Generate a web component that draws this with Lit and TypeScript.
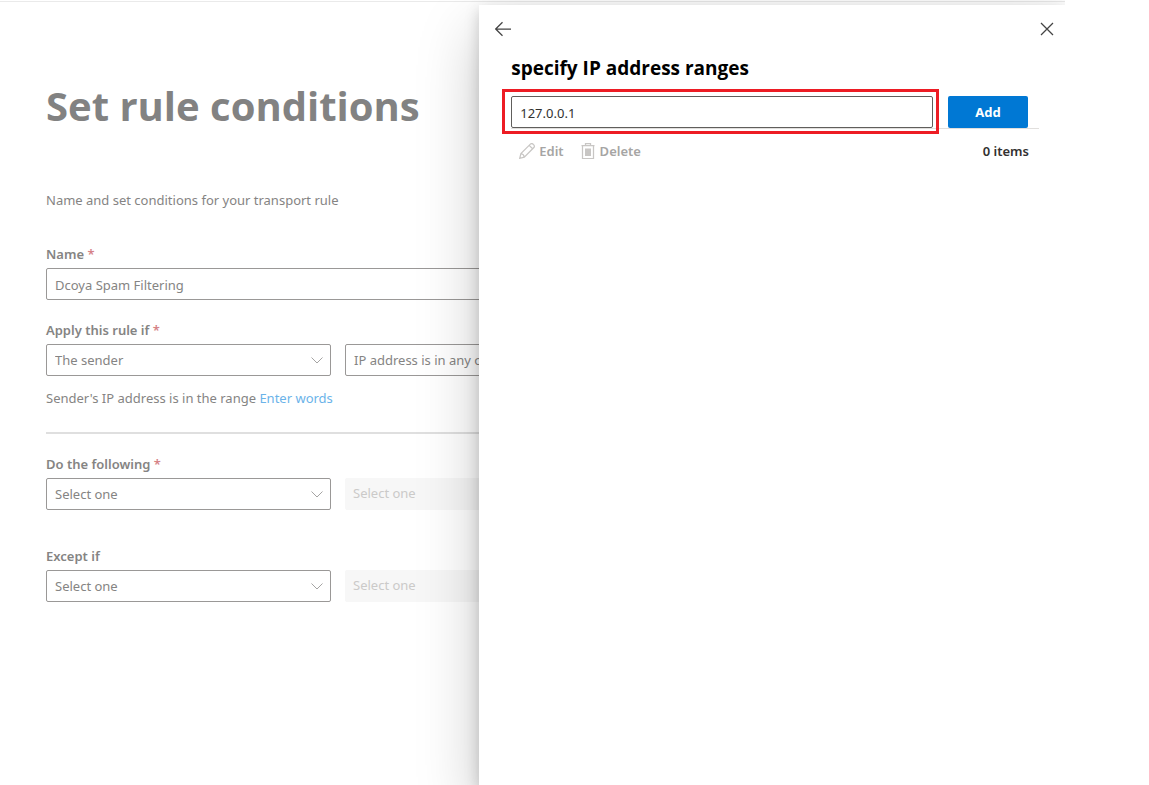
import { LitElement, html, css, nothing } from "lit";
import { customElement, property, state } from "lit/decorators.js";

const chevron = html`<svg class="chevron" viewBox="0 0 14 14" aria-hidden="true">
  <path d="M1.5 4.5 L7 10 L12.5 4.5" fill="none" stroke="currentColor" stroke-width="1" />
</svg>`;

@customElement("rule-select")
class RuleSelect extends LitElement {
  @property() label = "";
  @property() value = "";
  @property({ type: Boolean }) disabled = false;

  static styles = css`
    :host {
      display: block;
      min-width: 0;
    }
    .wrap {
      display: grid;
      align-items: center;
    }
    .select,
    .chevron {
      grid-area: 1 / 1;
    }
    .select {
      appearance: none;
      box-sizing: border-box;
      width: 100%;
      height: 32px;
      margin: 0;
      padding: 0 32px 0 8px;
      border: 1px solid #9a9897;
      border-radius: 2px;
      background: #fff;
      color: #858483;
      font: 400 13px/20px "Noto Sans", "Open Sans", sans-serif;
      opacity: 1;
      text-overflow: ellipsis;
    }
    .select:disabled {
      padding-left: 7px;
      padding-bottom: 2px;
      border-color: #f7f7f7;
      background: #f7f7f7;
      color: #cbcac9;
    }
    .chevron {
      justify-self: end;
      width: 14px;
      height: 14px;
      margin-right: 7px;
      color: #a5a4a3;
      pointer-events: none;
    }
  `;

  render() {
    return html`<div class="wrap">
      <select class="select" aria-label=${this.label} ?disabled=${this.disabled}>
        <option>${this.value}</option>
      </select>
      ${this.disabled ? nothing : chevron}
    </div>`;
  }
}

@customElement("app-root")
class AppRoot extends LitElement {
  @state() private address = "127.0.0.1";

  static styles = css`
    :host {
      display: block;
      background: #fff;
      font: 400 13px/20px "Noto Sans", "Open Sans", sans-serif;
      color: #858483;
    }
    .frame {
      position: relative;
      box-sizing: border-box;
      min-height: 100vh;
      margin-right: 84px;
      padding-top: 1px;
      overflow: hidden;
    }
    .page {
      padding: 75px 46px 0;
      border-top: 1px solid #eaeaea;
    }
    .title {
      margin: 0 0 55px;
      font-family: "Open Sans", sans-serif;
      font-size: 40px;
      line-height: 58px;
      font-weight: 700;
      color: #828282;
    }
    .intro {
      margin: 0 0 34px;
    }
    .form {
      display: flex;
      flex-direction: column;
      max-width: 640px;
    }
    .field {
      display: flex;
      flex-direction: column;
      margin-bottom: 20px;
    }
    .label {
      margin-bottom: 4px;
      font-weight: 600;
    }
    .star {
      color: #d58287;
    }
    .text {
      box-sizing: border-box;
      width: 100%;
      height: 32px;
      margin: 0;
      padding: 1px 8px 0;
      border: 1px solid #9a9897;
      border-radius: 2px;
      background: #fff;
      color: inherit;
      font: inherit;
    }
    .pair {
      display: grid;
      grid-template-columns: 285px 1fr;
      gap: 14px;
    }
    .summary {
      margin: 12px 0 4px;
    }
    .link {
      color: #6bb3e9;
      text-decoration: none;
    }
    .divider {
      width: 100%;
      height: 2px;
      margin: 0 0 20px;
      border: 0;
      background: #dfdfdf;
    }
    .spaced {
      margin-bottom: 36px;
    }
    .panel {
      position: absolute;
      top: 5px;
      right: 0;
      bottom: 0;
      box-sizing: border-box;
      width: 55%;
      background: #fff;
      color: #323130;
      box-shadow:
        0 26px 58px rgba(0, 0, 0, 0.22),
        0 5px 14px rgba(0, 0, 0, 0.18);
    }
    .nav {
      display: flex;
      justify-content: space-between;
      padding: 8px 2px 0 8px;
    }
    .icon-button {
      display: grid;
      place-items: center;
      width: 32px;
      height: 32px;
      padding: 0;
      border: 0;
      background: none;
      color: #444;
    }
    .icon {
      width: 16px;
      height: 16px;
      fill: none;
      stroke: currentColor;
      stroke-width: 1.25;
    }
    .content {
      padding: 8px 26px 0 32px;
    }
    .heading {
      margin: 0 0 13px;
      font-family: "Open Sans", sans-serif;
      font-size: 19px;
      line-height: 30px;
      font-weight: 700;
      color: #000;
    }
    .entry {
      display: flex;
      gap: 15px;
      padding-right: 11px;
      border-bottom: 1px solid #e1dfdd;
    }
    .marked {
      position: relative;
      flex: 1;
    }
    .marked::after {
      content: "";
      position: absolute;
      inset: -7px -6px -6px -9px;
      border: 3px solid #ed1c24;
      pointer-events: none;
    }
    .address {
      display: block;
      border-color: #605e5c;
    }
    .add {
      width: 80px;
      height: 32px;
      padding: 0;
      border: 0;
      border-radius: 2px;
      background: #0078d4;
      color: #fff;
      font: inherit;
      font-weight: 700;
    }
    .toolbar {
      display: flex;
      align-items: center;
      gap: 16px;
      padding: 12px 10px 0 8px;
    }
    .tool {
      display: flex;
      align-items: center;
      gap: 4px;
      padding: 0;
      border: 0;
      background: none;
      color: #a6a5a4;
      font: inherit;
      font-weight: 600;
    }
    .tool-icon {
      color: #c8c6c4;
    }
    .count {
      margin-left: auto;
      font-weight: 600;
    }
  `;

  private onInput(e: Event) {
    this.address = (e.target as HTMLInputElement).value;
  }

  render() {
    const star = html`<span class="star">*</span>`;
    return html`
      <div class="frame">
        <main class="page">
          <h1 class="title">Set rule conditions</h1>
          <p class="intro">Name and set conditions for your transport rule</p>
          <form class="form">
            <div class="field">
              <label class="label" for="name">Name ${star}</label>
              <input class="text" id="name" value="Dcoya Spam Filtering" />
            </div>
            <div class="field">
              <span class="label">Apply this rule if ${star}</span>
              <div class="pair">
                <rule-select label="Apply this rule if" value="The sender"></rule-select>
                <rule-select label="Condition" value="IP address is in any of these ranges"></rule-select>
              </div>
              <p class="summary">
                Sender's IP address is in the range <a class="link" href="#words">Enter words</a>
              </p>
            </div>
            <hr class="divider" />
            <div class="field spaced">
              <span class="label">Do the following ${star}</span>
              <div class="pair">
                <rule-select label="Do the following" value="Select one"></rule-select>
                <rule-select label="Action detail" value="Select one" disabled></rule-select>
              </div>
            </div>
            <div class="field">
              <span class="label">Except if</span>
              <div class="pair">
                <rule-select label="Except if" value="Select one"></rule-select>
                <rule-select label="Exception detail" value="Select one" disabled></rule-select>
              </div>
            </div>
          </form>
        </main>

        <aside class="panel" role="dialog" aria-labelledby="heading">
          <div class="nav">
            <button class="icon-button" type="button" aria-label="Back">
              <svg class="icon" viewBox="0 0 16 16">
                <path d="M16 8 H1 M7.5 1.2 L0.7 8 L7.5 14.8" />
              </svg>
            </button>
            <button class="icon-button" type="button" aria-label="Close">
              <svg class="icon" viewBox="0 0 16 16">
                <path d="M2 2 L14 14 M14 2 L2 14" />
              </svg>
            </button>
          </div>
          <div class="content">
            <h2 class="heading" id="heading">specify IP address ranges</h2>
            <div class="entry">
              <div class="marked">
                <input
                  class="text address"
                  aria-labelledby="heading"
                  .value=${this.address}
                  @input=${this.onInput}
                />
              </div>
              <button class="add" type="button">Add</button>
            </div>
            <div class="toolbar">
              <button class="tool" type="button" disabled>
                <svg class="icon tool-icon" viewBox="0 0 16 16">
                  <path
                    d="M0.7 15.3 L1.9 10.6 L11.6 0.9 Q12.9 0 14.3 1.4 Q15.9 2.9 15.1 4.3 L5.3 14.1 Z M10.2 2.4 L13.6 5.8 M1.9 10.6 Q4.8 10.9 5.3 14.1"
                  />
                </svg>
                Edit
              </button>
              <button class="tool" type="button" disabled>
                <svg class="icon tool-icon" viewBox="0 0 16 16">
                  <path d="M1.5 2.5 H14.5 M5.5 2.5 V0.5 H10.5 V2.5 M2.5 2.5 V15.5 H13.5 V2.5" />
                  <path d="M5 5.5 H11 V13 H5 Z" fill="currentColor" stroke="none" />
                </svg>
                Delete
              </button>
              <span class="count">0 items</span>
            </div>
          </div>
        </aside>
      </div>
    `;
  }
}
